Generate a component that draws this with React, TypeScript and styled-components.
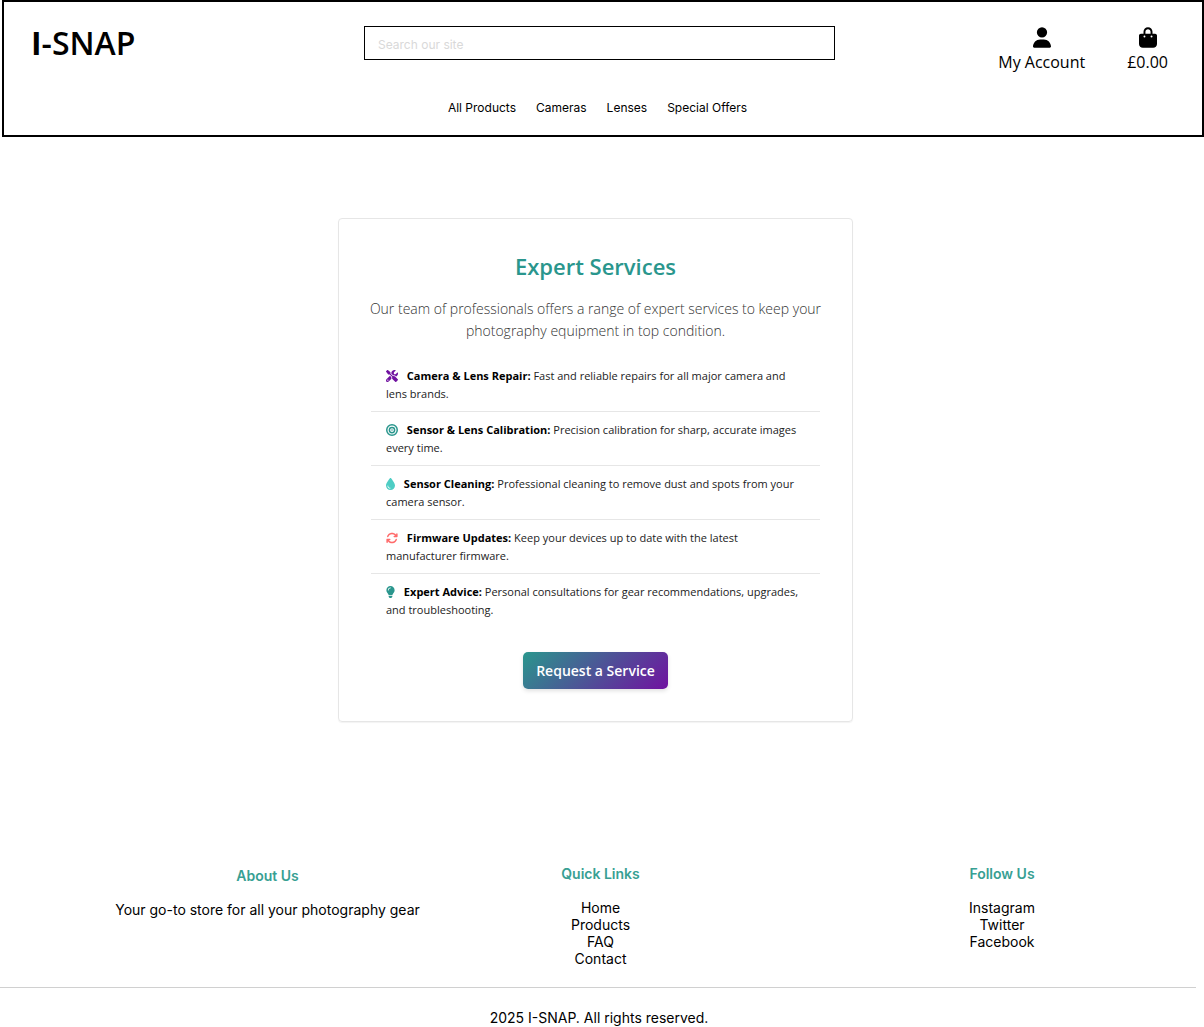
import React from "react";
import styled, { createGlobalStyle } from "styled-components";
import {
  FaUser,
  FaBagShopping,
  FaScrewdriverWrench,
  FaBullseye,
  FaDroplet,
  FaArrowsRotate,
  FaLightbulb,
} from "react-icons/fa6";
import type { IconType } from "react-icons";

const humanist = `"Open Sans", "Noto Sans", sans-serif`;
const teal = "#2a968d";
const softTeal = "#38a093";
const purple = "#7012a0";

const GlobalStyle = createGlobalStyle`
  *, *::before, *::after { box-sizing: border-box; }
  body {
    margin: 0;
    background: #fff;
    color: #000;
    font-family: Inter, "Liberation Sans", sans-serif;
    font-size: 14px;
    line-height: 17px;
  }
  a { color: inherit; text-decoration: none; }
  h1, h2, h3, p, ul { margin: 0; padding: 0; }
  ul { list-style: none; }
`;

const Header = styled.header`
  margin-left: 2px;
  padding: 24px 34px 20px 27px;
  border: 2px solid #000;
`;

const TopBar = styled.div`
  display: grid;
  grid-template-columns: 1fr minmax(0, 471px) 1fr;
  align-items: start;
`;

const Logo = styled.h1`
  font-family: ${humanist};
  font-size: 32px;
  font-weight: 600;
  line-height: 34px;

  b { font-weight: 700; }
`;

const Search = styled.input`
  width: 100%;
  height: 34px;
  padding: 2px 13px 0;
  border: 1px solid #000;
  border-radius: 0;
  background: #fff;
  font-family: inherit;
  font-size: 12px;

  &::placeholder { color: #d9d9d9; opacity: 1; }
`;

const Actions = styled.div`
  display: flex;
  justify-content: flex-end;
  gap: 42px;
  padding-top: 1px;
`;

const Action = styled.a`
  display: flex;
  flex-direction: column;
  align-items: center;
  gap: 4px;
  font-family: ${humanist};
  font-size: 16px;
  line-height: 20px;

  svg { height: 21px; width: 18px; }
`;

const Nav = styled.nav`
  display: flex;
  justify-content: center;
  gap: 20px;
  margin-top: 28px;
  padding-right: 4px;
  font-size: 12px;
  line-height: 15px;
`;

const Main = styled.main`
  display: flex;
  justify-content: center;
  padding: 81px 13px 0 0;
`;

const Card = styled.section`
  width: 100%;
  max-width: 515px;
  padding: 32px;
  border: 1px solid #e6e6e6;
  border-radius: 4px;
  box-shadow: 0 1px 1px rgba(0, 0, 0, 0.05);
  font-family: ${humanist};
  text-align: center;
`;

const CardTitle = styled.h2`
  color: ${teal};
  font-size: 22px;
  font-weight: 600;
  line-height: 30px;
`;

const Intro = styled.p`
  margin: 17px -8px 0;
  color: #333;
  font-size: 14px;
  font-weight: 300;
  line-height: 22px;
`;

const ServiceItem = styled.li`
  padding: 9px 15px 8px;
  border-bottom: 1px solid #e6e6e6;
  color: #222;
  font-size: 11px;
  line-height: 18px;
  text-align: left;

  &:last-child { border-bottom: 0; }
  strong { color: #000; font-weight: 700; }
`;

const ServiceList = styled.ul`
  margin-top: 16px;
`;

const ServiceIcon = styled.span<{ $color: string; $narrow?: boolean }>`
  margin-right: 6px;
  color: ${(p) => p.$color};

  svg {
    width: ${(p) => (p.$narrow ? 9 : 12)}px;
    height: 12px;
    vertical-align: -2px;
  }
`;

const RequestButton = styled.button`
  height: 37px;
  margin-top: 25px;
  padding: 0 13px;
  border: 0;
  border-radius: 5px;
  background: linear-gradient(135deg, ${teal}, ${purple});
  box-shadow: 0 2px 4px rgba(0, 0, 0, 0.12);
  color: #fff;
  font-family: inherit;
  font-size: 14px;
  font-weight: 600;
`;

const Footer = styled.footer`
  margin-top: 143px;
`;

const FooterColumns = styled.div`
  display: grid;
  grid-template-columns: 339fr 327fr 44fr 388fr;
  padding: 0 8px 0 98px;
  text-align: center;
`;

const FooterColumn = styled.section<{ $column: number; $drop?: boolean }>`
  grid-column: ${(p) => p.$column};
  padding-top: ${(p) => (p.$drop ? 2 : 0)}px;
`;

const FooterTitle = styled.h3`
  margin-bottom: 17px;
  color: ${softTeal};
  font-size: 14px;
  font-weight: 600;
`;

const Copyright = styled.p`
  margin: 20px 8px 0 0;
  padding: 21px 0 0 2px;
  border-top: 1px solid #d0d0d0;
  text-align: center;
`;

interface Service {
  icon: IconType;
  color: string;
  narrow?: boolean;
  name: string;
  text: string;
}

const services: Service[] = [
  { icon: FaScrewdriverWrench, color: purple, name: "Camera & Lens Repair:", text: "Fast and reliable repairs for all major camera and lens brands." },
  { icon: FaBullseye, color: teal, name: "Sensor & Lens Calibration:", text: "Precision calibration for sharp, accurate images every time." },
  { icon: FaDroplet, color: "#4ecdc4", narrow: true, name: "Sensor Cleaning:", text: "Professional cleaning to remove dust and spots from your camera sensor." },
  { icon: FaArrowsRotate, color: "#ff6b6b", name: "Firmware Updates:", text: "Keep your devices up to date with the latest manufacturer firmware." },
  { icon: FaLightbulb, color: teal, narrow: true, name: "Expert Advice:", text: "Personal consultations for gear recommendations, upgrades, and troubleshooting." },
];

const LinkList = ({ items }: { items: string[] }) => (
  <ul>
    {items.map((item) => (
      <li key={item}><a href="#">{item}</a></li>
    ))}
  </ul>
);

export default function App() {
  return (
    <>
      <GlobalStyle />
      <Header>
        <TopBar>
          <Logo><b>I</b>-SNAP</Logo>
          <Search type="search" aria-label="Search our site" placeholder="Search our site" />
          <Actions>
            <Action href="#"><FaUser />My Account</Action>
            <Action href="#"><FaBagShopping />£0.00</Action>
          </Actions>
        </TopBar>
        <Nav>
          {["All Products", "Cameras", "Lenses", "Special Offers"].map((item) => (
            <a key={item} href="#">{item}</a>
          ))}
        </Nav>
      </Header>
      <Main>
        <Card>
          <CardTitle>Expert Services</CardTitle>
          <Intro>
            Our team of professionals offers a range of expert services to keep your photography equipment in top condition.
          </Intro>
          <ServiceList>
            {services.map(({ icon: Icon, color, narrow, name, text }) => (
              <ServiceItem key={name}>
                <ServiceIcon $color={color} $narrow={narrow}><Icon /></ServiceIcon> <strong>{name}</strong> {text}
              </ServiceItem>
            ))}
          </ServiceList>
          <RequestButton type="button">Request a Service</RequestButton>
        </Card>
      </Main>
      <Footer>
        <FooterColumns>
          <FooterColumn $column={1} $drop>
            <FooterTitle>About Us</FooterTitle>
            <p>Your go-to store for all your photography gear</p>
          </FooterColumn>
          <FooterColumn $column={2}>
            <FooterTitle>Quick Links</FooterTitle>
            <LinkList items={["Home", "Products", "FAQ", "Contact"]} />
          </FooterColumn>
          <FooterColumn $column={4}>
            <FooterTitle>Follow Us</FooterTitle>
            <LinkList items={["Instagram", "Twitter", "Facebook"]} />
          </FooterColumn>
        </FooterColumns>
        <Copyright>2025 I-SNAP. All rights reserved.</Copyright>
      </Footer>
    </>
  );
}
